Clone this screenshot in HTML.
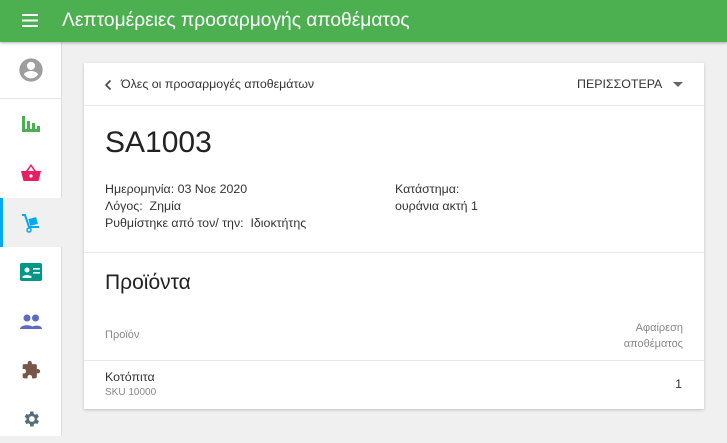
<!DOCTYPE html>
<html><head><meta charset="utf-8"><style>
*{box-sizing:border-box;margin:0;padding:0}
body{width:727px;height:436px;overflow:hidden;background:#f0f0f0;font-family:"Liberation Sans",sans-serif;color:#333;position:relative}
.top{position:absolute;left:0;top:0;width:727px;height:42px;background:#4caf50;color:#fff;font-size:19.2px;line-height:42px;box-shadow:0 1px 3px rgba(0,0,0,.3);z-index:2}
.top .t{position:absolute;left:62px;top:0}
.side{position:absolute;left:0;top:42px;width:62px;height:394px;background:#fff;border-right:1px solid #ddd}
.ic{position:absolute;left:0;width:62px;height:49px;display:flex;align-items:center;justify-content:center}
.card{position:absolute;left:84px;top:63px;width:620px;height:346px;background:#fff;box-shadow:0 1px 3px rgba(0,0,0,.2)}
.abs{position:absolute;white-space:nowrap}
.s13{font-size:12.4px;color:#333}
.hr{position:absolute;left:0;width:620px;height:1px;background:#e8e8e8}
</style></head><body>
<div class="top">
<svg style="position:absolute;left:22px;top:14px" width="16" height="13"><rect y="0" width="16" height="2" fill="#fff"/><rect y="5.5" width="16" height="2" fill="#fff"/><rect y="11" width="16" height="2" fill="#fff"/></svg>
<span class="t">Λεπτομέρειες προσαρμογής αποθέματος</span></div>
<div class="side">
<div class="ic" style="top:3px;height:49px"><svg width="28" height="28" viewBox="0 0 24 24"><path fill="#9e9e9e" d="M12 2a10 10 0 100 20 10 10 0 000-20zm0 3a3.5 3.5 0 110 7 3.5 3.5 0 010-7zm0 14.2a7.3 7.3 0 01-6-3.2c0-2 4-3.1 6-3.1s6 1.1 6 3.1a7.3 7.3 0 01-6 3.2z"/></svg></div>
<div style="position:absolute;left:0;top:56px;width:62px;height:1px;background:#e5e5e5"></div>
<div class="ic" style="top:57px"><svg width="20" height="18" viewBox="0 0 20 18"><rect x="1" y="1" width="3" height="16" fill="#4caf50"/><rect x="1" y="14" width="18" height="3" fill="#4caf50"/><rect x="6" y="6" width="3" height="11" fill="#4caf50"/><rect x="11" y="8" width="3" height="9" fill="#4caf50"/><rect x="16" y="11" width="3" height="6" fill="#4caf50"/></svg></div>
<div class="ic" style="top:106px"><svg width="22" height="20" viewBox="0 0 22 20"><path fill="#e91e63" d="M11 1l-5 7h2l3-4.5 3 4.5h2zM1 8h20l-2.5 10h-15z"/><circle cx="11" cy="13" r="1.6" fill="#fff"/></svg></div>
<div style="position:absolute;left:0;top:156px;width:62px;height:49px;background:#f0f0f0"></div>
<div style="position:absolute;left:0;top:156px;width:3px;height:49px;background:#03a9f4"></div>
<div class="ic" style="top:156px"><svg width="20" height="20" viewBox="0 0 20 20"><path d="M1 2h3l4 12h10" stroke="#03a9f4" stroke-width="2" fill="none"/><rect x="8" y="5" width="8" height="7" fill="#03a9f4" transform="rotate(-15 12 8)"/><circle cx="8" cy="17" r="2" fill="none" stroke="#03a9f4" stroke-width="1.5"/></svg></div>
<div class="ic" style="top:205px"><svg width="22" height="18" viewBox="0 0 22 18"><rect width="22" height="18" rx="2" fill="#009688"/><circle cx="7" cy="7" r="2.5" fill="#fff"/><path d="M2.5 14c0-2.5 9-2.5 9 0v1h-9z" fill="#fff"/><rect x="13" y="5" width="7" height="1.6" fill="#fff"/><rect x="13" y="9" width="7" height="1.6" fill="#fff"/></svg></div>
<div class="ic" style="top:255px"><svg width="22" height="16" viewBox="0 0 22 16"><circle cx="7" cy="4" r="3.5" fill="#5c6bc0"/><circle cx="15.5" cy="4" r="3.5" fill="#5c6bc0"/><path d="M0 15c0-5 14-5 14 0zM10 15c1-4 12-5 12 0z" fill="#5c6bc0"/></svg></div>
<div class="ic" style="top:303px"><svg width="20" height="20" viewBox="0 0 24 24"><path fill="#795548" d="M20.5 11H19V7a2 2 0 00-2-2h-4V3.5a2.5 2.5 0 00-5 0V5H4a2 2 0 00-2 2v3.8h1.5a2.7 2.7 0 010 5.4H2V20a2 2 0 002 2h3.8v-1.5a2.7 2.7 0 015.4 0V22H17a2 2 0 002-2v-4h1.5a2.5 2.5 0 000-5z"/></svg></div>
<div class="ic" style="top:352px"><svg width="20" height="20" viewBox="0 0 24 24"><path fill="#546e7a" d="M19.4 13a7.8 7.8 0 000-2l2.1-1.6-2-3.5-2.5 1a7.3 7.3 0 00-1.7-1L15 3h-4l-.4 2.9a7.3 7.3 0 00-1.7 1l-2.5-1-2 3.5L6.6 11a7.8 7.8 0 000 2l-2.1 1.6 2 3.5 2.5-1a7.3 7.3 0 001.7 1L11 21h4l.4-2.9a7.3 7.3 0 001.7-1l2.5 1 2-3.5zM13 15.5a3.5 3.5 0 110-7 3.5 3.5 0 010 7z"/></svg></div>
</div>
<div class="card">
<svg class="abs" style="left:20px;top:16px" width="8" height="12"><path d="M6.5 1.5L2 6l4.5 4.5" stroke="#444" stroke-width="1.6" fill="none"/></svg>
<div class="abs s13" style="left:37px;top:14px">Όλες οι προσαρμογές αποθεμάτων</div>
<div class="abs s13" style="left:493px;top:14px">ΠΕΡΙΣΣΟΤΕΡΑ</div>
<svg class="abs" style="left:589px;top:19px" width="10" height="6"><path d="M0 0h10L5 5z" fill="#666"/></svg>
<div class="hr" style="top:42px"></div>
<div class="abs" style="left:21px;top:63px;font-size:30px;color:#222">SA1003</div>
<div class="abs s13" style="left:21px;top:118px;line-height:17px">Ημερομηνία: 03 Νοε 2020<br>Λόγος:&nbsp; Ζημία<br>Ρυθμίστηκε από τον/ την:&nbsp; Ιδιοκτήτης</div>
<div class="abs s13" style="left:311px;top:118px;line-height:17px">Κατάστημα:<br>ουράνια ακτή 1</div>
<div class="hr" style="top:189px"></div>
<div class="abs" style="left:21px;top:208px;font-size:21px;color:#222">Προϊόντα</div>
<div class="abs" style="left:21px;top:266px;font-size:11px;color:#888">Προϊόν</div>
<div class="abs" style="right:21px;top:257px;font-size:11px;color:#888;text-align:right;line-height:16px">Αφαίρεση<br>αποθέματος</div>
<div class="hr" style="top:297px"></div>
<div class="abs s13" style="left:21px;top:307px">Κοτόπιτα</div>
<div class="abs" style="left:21px;top:324px;font-size:10px;color:#888">SKU 10000</div>
<div class="abs s13" style="right:22px;top:314px">1</div>
</div>
</body></html>
